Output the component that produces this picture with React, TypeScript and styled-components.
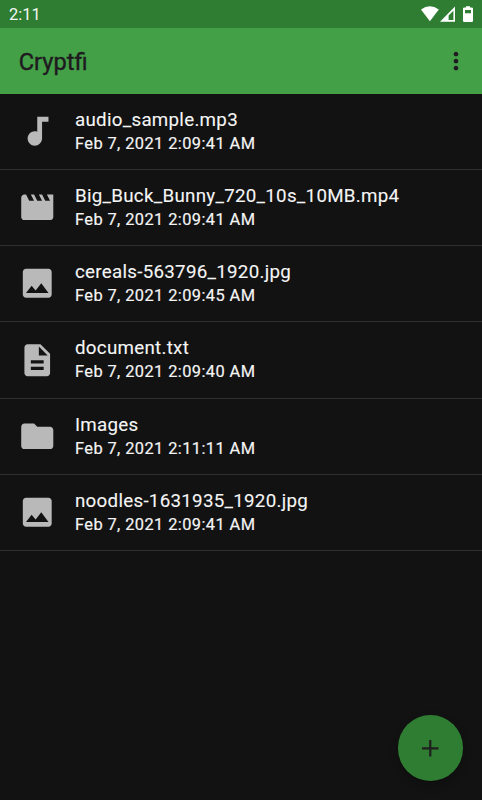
import React from "react";
import styled, { createGlobalStyle } from "styled-components";

const GlobalStyle = createGlobalStyle`
  * { box-sizing: border-box; }
  body { margin: 0; background: #121212; font-family: Roboto, sans-serif; }
`;

const Screen = styled.div`
  position: relative;
  display: flex;
  flex-direction: column;
  width: 482px;
  height: 800px;
  overflow: hidden;
  background: #121212;
`;

const StatusBar = styled.header`
  display: flex;
  align-items: center;
  justify-content: space-between;
  flex: none;
  height: 28px;
  padding: 0 9px;
  background: #2e7d32;
  color: #f4f8f4;
`;

const Clock = styled.span`
  font-size: 16.4px;
  line-height: 20px;
  padding-top: 2px;
`;

const StatusIcons = styled.svg`
  display: block;
  width: 54px;
  height: 28px;
  fill: #fff;
`;

const AppBar = styled.div`
  display: flex;
  align-items: center;
  justify-content: space-between;
  flex: none;
  height: 65.6px;
  padding: 1px 12px 0 18.7px;
  background: #43a047;
  color: #1f1a20;
`;

const AppTitle = styled.h1`
  margin: 0;
  padding-top: 1px;
  font-size: 23.6px;
  line-height: 32px;
  font-weight: 400;
  -webkit-text-stroke: 0.4px currentColor;
`;

const MenuButton = styled.button`
  display: flex;
  padding: 0;
  border: 0;
  background: none;
  color: inherit;
`;

const Glyph = styled.svg<{ $size: number }>`
  display: block;
  flex: none;
  width: ${(p) => p.$size}px;
  height: ${(p) => p.$size}px;
  fill: currentColor;
`;

const FileList = styled.ul`
  margin: 0;
  padding: 0;
  list-style: none;
`;

const FileRow = styled.li`
  display: flex;
  align-items: center;
  gap: 18.5px;
  height: 76.25px;
  padding: 0 18px;
  border-bottom: 1px solid #303030;
  color: #b9b9b9;
`;

const FileText = styled.div`
  display: flex;
  flex-direction: column;
  padding-top: 1px;
  color: #f5f5f5;
`;

const FileName = styled.span`
  font-size: 18.75px;
  line-height: 24px;
  letter-spacing: 0.27px;
  white-space: nowrap;
  -webkit-text-stroke: 0.1px currentColor;
`;

const FileDate = styled.span`
  font-size: 16.4px;
  line-height: 24px;
  font-weight: 400;
  letter-spacing: 0.41px;
  white-space: nowrap;
  -webkit-text-stroke: 0.18px currentColor;
`;

const AddButton = styled.button`
  position: absolute;
  right: 18.7px;
  bottom: 18.8px;
  display: flex;
  align-items: center;
  justify-content: center;
  width: 65.8px;
  height: 65.8px;
  padding: 0;
  border: 0;
  border-radius: 50%;
  background: #2e7d32;
  color: #1f1f1f;
  box-shadow: 0 4px 8px rgba(0, 0, 0, 0.25);
`;

const icons = {
  audio:
    "M12 3v9.28c-.47-.17-.97-.28-1.5-.28C8.01 12 6 14.01 6 16.5S8.01 21 10.5 21c2.31 0 4.2-1.75 4.45-4H15V6h4V3h-7z",
  video:
    "M18 4l2 4h-3l-2-4h-2l2 4h-3l-2-4H8l2 4H7L5 4H4c-1.1 0-1.99.9-1.99 2L2 18c0 1.1.9 2 2 2h16c1.1 0 2-.9 2-2V4h-4z",
  image:
    "M21 19V5c0-1.1-.9-2-2-2H5c-1.1 0-2 .9-2 2v14c0 1.1.9 2 2 2h14c1.1 0 2-.9 2-2zM8.5 13.5l2.5 3.01L14.5 12l4.5 6H5l3.5-4.5z",
  document:
    "M14 2H6c-1.1 0-1.99.9-1.99 2L4 20c0 1.1.89 2 1.99 2H18c1.1 0 2-.9 2-2V8l-6-6zm2 16H8v-2h8v2zm0-4H8v-2h8v2zm-3-5V3.5L18.5 9H13z",
  folder:
    "M10 4H4c-1.1 0-1.99.9-1.99 2L2 18c0 1.1.9 2 2 2h16c1.1 0 2-.9 2-2V8c0-1.1-.9-2-2-2h-8l-2-2z",
  more: "M12 8c1.1 0 2-.9 2-2s-.9-2-2-2-2 .9-2 2 .9 2 2 2zm0 2c-1.1 0-2 .9-2 2s.9 2 2 2 2-.9 2-2-.9-2-2-2zm0 6c-1.1 0-2 .9-2 2s.9 2 2 2 2-.9 2-2-.9-2-2-2z",
  add: "M19.3 13.2H13.2v6.1h-1.9v-6.1H5.2v-1.9h6.1V5.2h1.9v6.1h6.1z",
};

type IconName = keyof typeof icons;

const Icon = ({ name, size }: { name: IconName; size: number }) => (
  <Glyph $size={size} viewBox="0 0 24 24" aria-hidden>
    <path d={icons[name]} />
  </Glyph>
);

const files: { name: string; date: string; icon: IconName }[] = [
  { name: "audio_sample.mp3", date: "Feb 7, 2021 2:09:41 AM", icon: "audio" },
  { name: "Big_Buck_Bunny_720_10s_10MB.mp4", date: "Feb 7, 2021 2:09:41 AM", icon: "video" },
  { name: "cereals-563796_1920.jpg", date: "Feb 7, 2021 2:09:45 AM", icon: "image" },
  { name: "document.txt", date: "Feb 7, 2021 2:09:40 AM", icon: "document" },
  { name: "Images", date: "Feb 7, 2021 2:11:11 AM", icon: "folder" },
  { name: "noodles-1631935_1920.jpg", date: "Feb 7, 2021 2:09:41 AM", icon: "image" },
];

export default function App() {
  return (
    <>
      <GlobalStyle />
      <Screen>
        <StatusBar>
          <Clock>2:11</Clock>
          <StatusIcons viewBox="0 0 54 28" aria-hidden>
            <path d="M2 9.6Q10.9 2.9 19.8 9.6L10.9 21.2Z" />
            <path fillRule="evenodd" d="M36 6.4V21.7H21ZM34.4 10.8 29.6 15.6V20.1H34.4Z" />
            <path
              fillRule="evenodd"
              d="M47 6.2h4v1.4h1.8q1.2 0 1.2 1.2v12q0 1.2-1.2 1.2h-7.6q-1.2 0-1.2-1.2V8.8q0-1.2 1.2-1.2h1.8ZM46 10v3.3h6V10Z"
            />
          </StatusIcons>
        </StatusBar>
        <AppBar>
          <AppTitle>Cryptfi</AppTitle>
          <MenuButton aria-label="More options">
            <Icon name="more" size={28} />
          </MenuButton>
        </AppBar>
        <FileList>
          {files.map((file) => (
            <FileRow key={file.name}>
              <Icon name={file.icon} size={38.5} />
              <FileText>
                <FileName>{file.name}</FileName>
                <FileDate>{file.date}</FileDate>
              </FileText>
            </FileRow>
          ))}
        </FileList>
        <AddButton aria-label="Add">
          <Icon name="add" size={28} />
        </AddButton>
      </Screen>
    </>
  );
}
